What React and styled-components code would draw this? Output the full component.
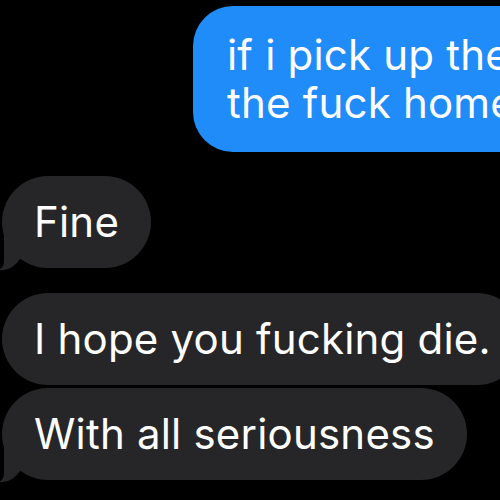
import styled, { createGlobalStyle } from "styled-components";

const GlobalStyle = createGlobalStyle`
  html, body {
    margin: 0;
    padding: 0;
    background: #000;
  }
  body {
    font-family: Inter, "Liberation Sans", Arial, sans-serif;
    -webkit-font-smoothing: antialiased;
  }
`;

const Thread = styled.div`
  width: 500px;
  height: 500px;
  overflow: hidden;
  background: #000;
  display: flex;
  flex-direction: column;
  padding-top: 6px;
  box-sizing: border-box;
`;

const Row = styled.div`
  display: flex;
  justify-content: flex-start;
  padding-left: ${(props) => props.$indent || 2}px;
  margin-top: ${(props) => props.$gap || 0}px;
  flex: none;
`;

const Bubble = styled.div`
  position: relative;
  flex: none;
  box-sizing: border-box;
  color: #fff;
  font-size: 42px;
  line-height: 48px;
  white-space: nowrap;
  letter-spacing: 0.2px;
  background: ${(props) => (props.$mine ? "#1f8cf9" : "#262628")};
  border-radius: ${(props) => (props.$mine ? "40px" : "46px")};
  padding: ${(props) => (props.$mine ? "25px 34px" : "22px 32px 22px 32px")};
  min-width: ${(props) => props.$minWidth || 0}px;
`;

const Tail = styled.svg`
  position: absolute;
  left: -3px;
  bottom: -3px;
  width: 24px;
  height: 44px;
  fill: #262628;
`;

const ThemTail = () => (
  <Tail viewBox="0 0 24 44">
    <path d="M5 0 L5 34 Q5 40 0 43 Q12 45 22 31 L22 0 Z" />
  </Tail>
);

export default function App() {
  return (
    <>
      <GlobalStyle />
      <Thread>
        <Row $indent={193}>
          <Bubble $mine $minWidth={360}>
            <div>if i pick up the</div>
            <div>the fuck home</div>
          </Bubble>
        </Row>
        <Row $gap={24}>
          <Bubble>
            Fine
            <ThemTail />
          </Bubble>
        </Row>
        <Row $gap={25}>
          <Bubble>I hope you fucking die.</Bubble>
        </Row>
        <Row $gap={3}>
          <Bubble>
            With all seriousness
            <ThemTail />
          </Bubble>
        </Row>
      </Thread>
    </>
  );
}
